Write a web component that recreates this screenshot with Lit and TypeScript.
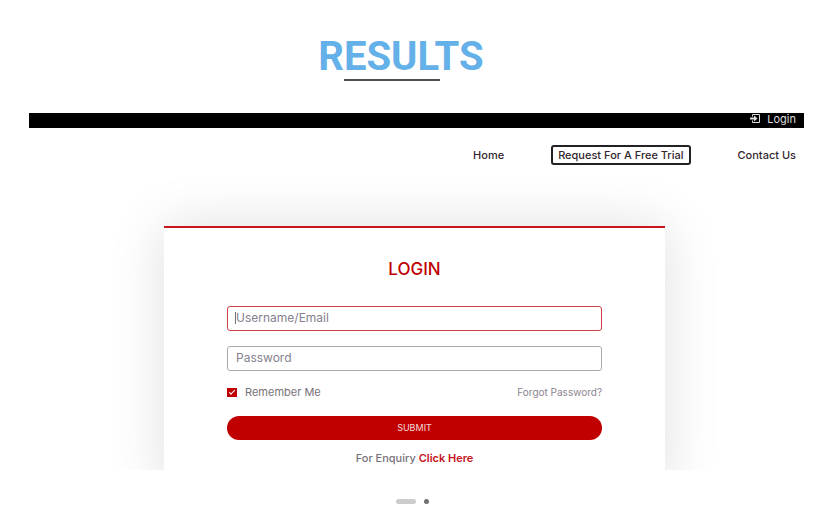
import { LitElement, html, css } from "lit";
import { customElement } from "lit/decorators.js";

@customElement("login-card")
class LoginCard extends LitElement {
  static styles = css`
    :host {
      display: block;
      box-sizing: border-box;
      padding: 0 63px;
      background: #fff;
      border-top: 2px solid #c8141c;
      box-shadow: 0 0 52px rgba(0, 0, 0, 0.13);
      color: #77727a;
    }
    form {
      display: flex;
      flex-direction: column;
    }
    .heading {
      margin: 29px 0 25px;
      font-size: 17px;
      line-height: 24px;
      font-weight: 500;
      text-align: center;
      color: #c00000;
    }
    .field {
      position: relative;
      display: flex;
      margin-bottom: 15px;
    }
    .field.focused::before {
      content: "";
      position: absolute;
      left: 8px;
      top: 6px;
      width: 1px;
      height: 12px;
      background: #77727a;
    }
    .input {
      box-sizing: border-box;
      width: 100%;
      height: 25px;
      padding: 0 8px 2px;
      border: 1px solid #aaa;
      border-radius: 3px;
      background: #fff;
      font: inherit;
      font-size: 12px;
      outline: none;
    }
    .input::placeholder {
      color: #85818f;
      opacity: 1;
    }
    .focused .input {
      border-color: #d04048;
    }
    .options {
      display: flex;
      justify-content: space-between;
      align-items: center;
      height: 16px;
      margin: -2px 0 16px;
    }
    .remember {
      display: flex;
      align-items: center;
      gap: 8px;
      font-size: 11px;
    }
    .tick {
      appearance: none;
      width: 10px;
      height: 9px;
      margin: 0;
      background: #c00000;
      display: grid;
      place-items: center;
    }
    .tick:checked::before {
      content: "";
      width: 5px;
      height: 2px;
      margin-bottom: 2px;
      border: solid #fff;
      border-width: 0 0 1px 1px;
      transform: rotate(-45deg);
    }
    .forgot {
      font-size: 10px;
      color: #8b8490;
      text-decoration: none;
    }
    .submit {
      height: 24px;
      padding: 0 0 2px;
      border: 0;
      border-radius: 12px;
      background: #c00000;
      color: #f6dcdc;
      font: inherit;
      font-size: 9px;
    }
    .enquiry {
      margin: 10px 0 24px;
      font-size: 11px;
      line-height: 16px;
      font-weight: 500;
      text-align: center;
    }
    .enquiry a {
      color: #c4141c;
      text-decoration: none;
      font-weight: 600;
    }
  `;

  render() {
    return html`
      <form @submit=${(e: Event) => e.preventDefault()}>
        <h2 class="heading">LOGIN</h2>
        <div class="field focused">
          <input class="input" type="text" aria-label="Username/Email" placeholder="Username/Email" />
        </div>
        <div class="field">
          <input class="input" type="password" aria-label="Password" placeholder="Password" />
        </div>
        <div class="options">
          <label class="remember"><input class="tick" type="checkbox" checked />Remember Me</label>
          <a class="forgot" href="#forgot">Forgot Password?</a>
        </div>
        <button class="submit" type="submit">SUBMIT</button>
        <p class="enquiry">For Enquiry <a href="#enquiry">Click Here</a></p>
      </form>
    `;
  }
}

@customElement("app-root")
class AppRoot extends LitElement {
  static styles = css`
    :host {
      display: block;
      background: #fff;
      font-family: Inter, "Liberation Sans", sans-serif;
    }
    .title-row {
      display: flex;
      justify-content: center;
      padding: 34px 23px 32px 0;
    }
    .title {
      margin: 0;
      font-family: Roboto, "Liberation Sans", sans-serif;
      font-size: 40px;
      line-height: 45px;
      font-weight: 700;
      color: #64b0e8;
    }
    .title::after {
      content: "";
      display: block;
      width: 96px;
      height: 2px;
      margin-left: 26px;
      background: #505050;
    }
    .slide {
      height: 357px;
      margin: 0 21px 0 29px;
      overflow: hidden;
    }
    .topbar {
      display: flex;
      justify-content: flex-end;
      height: 15px;
      padding-right: 8px;
      background: #000;
    }
    .login {
      display: flex;
      align-items: center;
      gap: 6px;
      height: 12px;
      font-size: 11px;
      color: #ddd;
      text-decoration: none;
    }
    .nav {
      display: flex;
      justify-content: flex-end;
      align-items: center;
      gap: 47px;
      height: 20px;
      margin: 17px 8px 61px 0;
      font-size: 11px;
      font-weight: 500;
    }
    .nav a {
      color: #33272f;
      text-decoration: none;
      white-space: nowrap;
    }
    .nav .trial {
      padding: 0 5px;
      border: 2px solid #222;
      border-radius: 3px;
      line-height: 16px;
    }
    .card {
      margin: 0 139px 0 135px;
    }
    .dots {
      display: flex;
      justify-content: center;
      align-items: center;
      gap: 8px;
      padding: 29px 0 20px;
    }
    .dot {
      width: 5px;
      height: 5px;
      padding: 0;
      border: 0;
      border-radius: 3px;
      background: #707070;
    }
    .dot.active {
      width: 20px;
      background: #ccc;
    }
  `;

  render() {
    return html`
      <header class="title-row"><h1 class="title">RESULTS</h1></header>
      <main class="slide">
        <div class="topbar">
          <a class="login" href="#login">
            <svg width="11" height="10" viewBox="0 0 11 10" fill="none" stroke="#ddd" aria-hidden="true">
              <path d="M2.500 2.500v-2h7v8h-7v-2" />
              <path d="M0 4.500h4" stroke-width="2" />
              <path d="M4 1.500l3.500 3L4 7.500z" fill="#ddd" stroke="none" />
            </svg>
            Login
          </a>
        </div>
        <nav class="nav">
          <a href="#home">Home</a>
          <a class="trial" href="#trial">Request For A Free Trial</a>
          <a href="#contact">Contact Us</a>
        </nav>
        <login-card class="card"></login-card>
      </main>
      <div class="dots">
        <button class="dot active" aria-label="Slide 1"></button>
        <button class="dot" aria-label="Slide 2"></button>
      </div>
    `;
  }
}
